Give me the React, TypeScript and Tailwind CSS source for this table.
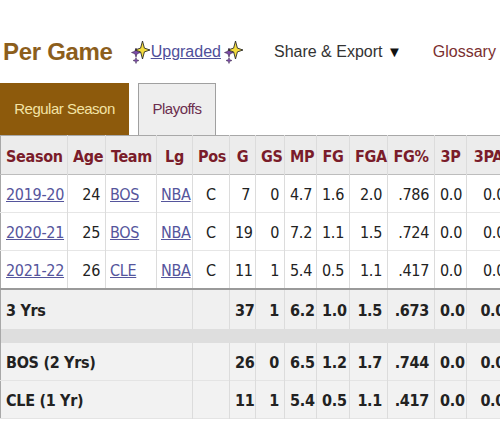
import React from 'react';

type Row = {
  season: string;
  age: string;
  team: string;
  stats: string[];
};

const headers = ['Season', 'Age', 'Team', 'Lg', 'Pos', 'G', 'GS', 'MP', 'FG', 'FGA', 'FG%', '3P', '3PA'];
const widths = [67, 38, 51, 36, 37, 26, 29, 32, 33, 38, 47, 32, 44];

const seasons: Row[] = [
  { season: '2019-20', age: '24', team: 'BOS', stats: ['7', '0', '4.7', '1.6', '2.0', '.786', '0.0', '0.0'] },
  { season: '2020-21', age: '25', team: 'BOS', stats: ['19', '0', '7.2', '1.1', '1.5', '.724', '0.0', '0.0'] },
  { season: '2021-22', age: '26', team: 'CLE', stats: ['11', '1', '5.4', '0.5', '1.1', '.417', '0.0', '0.0'] },
];

const totals = [
  { label: '3 Yrs', stats: ['37', '1', '6.2', '1.0', '1.5', '.673', '0.0', '0.0'] },
];

const teamTotals = [
  { label: 'BOS (2 Yrs)', stats: ['26', '0', '6.5', '1.2', '1.7', '.744', '0.0', '0.0'] },
  { label: 'CLE (1 Yr)', stats: ['11', '1', '5.4', '0.5', '1.1', '.417', '0.0', '0.0'] },
];

const Sparkle: React.FC = () => (
  <svg width="20" height="24" viewBox="0 0 20 24" className="shrink-0">
    <path d="M6 8 L7.2 11.3 L10.5 12.5 L7.2 13.7 L6 17 L4.8 13.7 L1.5 12.5 L4.8 11.3 Z" fill="#7b4aa8" stroke="#3a2a4a" strokeWidth="0.6" />
    <path d="M6 17.5 L6.8 19.7 L9 20.5 L6.8 21.3 L6 23.5 L5.2 21.3 L3 20.5 L5.2 19.7 Z" fill="#7b4aa8" stroke="#3a2a4a" strokeWidth="0.5" />
    <path d="M12.5 1 L14.4 8.1 L20 10 L14.4 11.9 L12.5 19 L10.6 11.9 L5 10 L10.6 8.1 Z" fill="#f4dc3c" stroke="#2a2a2a" strokeWidth="0.9" />
  </svg>
);

const cellBase = 'border-r border-[#dcdcdc] px-[5px] pt-[3px] whitespace-nowrap';

export default function App() {
  return (
    <div className="w-[500px] h-[440px] overflow-hidden bg-white font-['Liberation_Sans',Arial,sans-serif]">
      {/* Heading row */}
      <div className="flex items-center h-[83px] pl-[3px] pt-[20px] whitespace-nowrap">
        <h2 className="shrink-0 text-[24px] font-bold text-[#8c5e1c] tracking-[-0.3px] leading-none">Per Game</h2>
        <div className="flex shrink-0 items-center ml-[17px]">
          <Sparkle />
          <a href="#" className="ml-[1px] text-[16px] text-[#4f4f9a] underline leading-none">Upgraded</a>
          <span className="ml-[2px]">
            <Sparkle />
          </span>
        </div>
        <div className="shrink-0 ml-[31px] text-[16px] text-[#333] leading-none">
          Share &amp; Export <span className="text-[15px] text-[#111]">▼</span>
        </div>
        <div className="shrink-0 ml-[31px] text-[16px] text-[#7a2f2f] leading-none">Glossary</div>
      </div>

      {/* Tabs */}
      <div className="flex items-end h-[52px]">
        <div className="flex items-center justify-center w-[129px] h-full bg-[#8d5a0c] text-[#f3e3a4] text-[15px] tracking-[-0.5px]">
          Regular Season
        </div>
        <div className="flex items-center justify-center w-[78px] h-full ml-[9px] bg-[#eeeeee] border border-b-0 border-[#a0a0a0] text-[#6b2d4d] text-[15px] tracking-[-0.5px]">
          Playoffs
        </div>
      </div>

      {/* Stats table */}
      <table className="table-fixed border-collapse w-[510px] border-l border-t border-b border-[#a8a8a8] font-['DejaVu_Sans_Condensed','DejaVu_Sans',Verdana,sans-serif] text-[16px] tracking-[-0.3px] text-[#222]">
        <colgroup>
          {widths.map((w, i) => (
            <col key={i} style={{ width: w }} />
          ))}
        </colgroup>
        <thead>
          <tr className="h-[39px] bg-[#ececec] border-b border-[#bdbdbd]">
            {headers.map((h) => (
              <th key={h} className={`${cellBase} text-center font-bold text-[#7a1c2a]`}>
                {h}
              </th>
            ))}
          </tr>
        </thead>
        <tbody>
          {seasons.map((r) => (
            <tr key={r.season} className="h-[38px] bg-white border-b border-[#e6e6e6]">
              <td className={`${cellBase} text-left`}>
                <a href="#" className="text-[#55559c] underline">{r.season}</a>
              </td>
              <td className={`${cellBase} text-right`}>{r.age}</td>
              <td className={`${cellBase} text-left !px-[4px]`}>
                <a href="#" className="text-[#55559c] underline">{r.team}</a>
              </td>
              <td className={`${cellBase} text-left !px-[4px]`}>
                <a href="#" className="text-[#55559c] underline">NBA</a>
              </td>
              <td className={`${cellBase} text-center`}>C</td>
              {r.stats.map((s, i) => (
                <td key={i} className={`${cellBase} text-right`}>{s}</td>
              ))}
            </tr>
          ))}
          {totals.map((t) => (
            <tr key={t.label} className="h-[40px] bg-[#f0f0f0] border-t-2 border-[#9a9a9a] font-bold">
              <td colSpan={4} className={`${cellBase} text-left`}>{t.label}</td>
              <td className={cellBase}></td>
              {t.stats.map((s, i) => (
                <td key={i} className={`${cellBase} text-right`}>{s}</td>
              ))}
            </tr>
          ))}
          <tr className="h-[14px] bg-[#dedede]">
            <td colSpan={13}></td>
          </tr>
          {teamTotals.map((t) => (
            <tr key={t.label} className="h-[38px] bg-[#f2f2f2] border-b border-[#e4e4e4] font-bold">
              <td colSpan={4} className={`${cellBase} text-left`}>{t.label}</td>
              <td className={cellBase}></td>
              {t.stats.map((s, i) => (
                <td key={i} className={`${cellBase} text-right`}>{s}</td>
              ))}
            </tr>
          ))}
        </tbody>
      </table>
    </div>
  );
}
